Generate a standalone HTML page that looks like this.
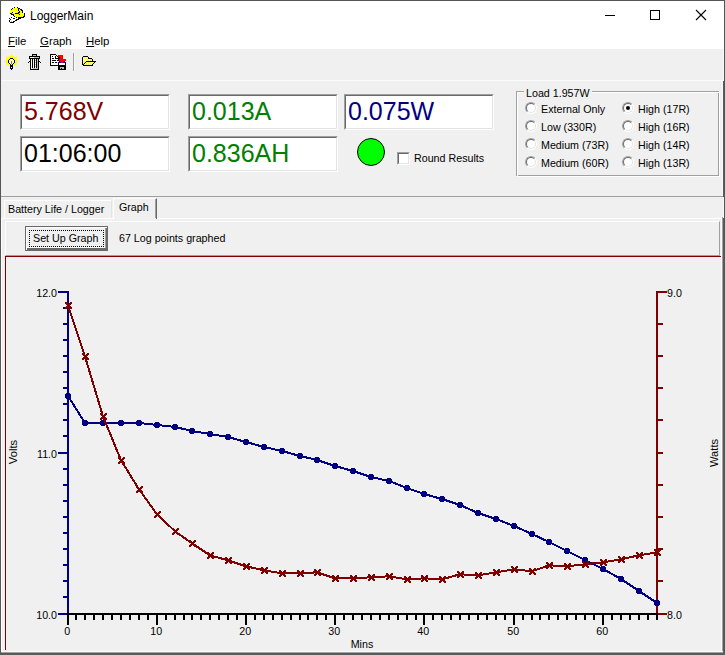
<!DOCTYPE html>
<html><head><meta charset="utf-8">
<style>
*{margin:0;padding:0;box-sizing:border-box}
html,body{width:725px;height:655px;overflow:hidden;background:#f0f0f0;font-family:"Liberation Sans",sans-serif;color:#000}
.a{position:absolute}
.t{position:absolute;white-space:nowrap;line-height:1}
.box{position:absolute;width:150px;height:36px;background:#fff;border-top:1px solid #a0a0a0;border-left:1px solid #a0a0a0;border-right:1px solid #fff;border-bottom:1px solid #fff}
.box .in{position:absolute;left:0;top:0;right:0;bottom:0;border-top:1px solid #696969;border-left:1px solid #696969;border-right:1px solid #e3e3e3;border-bottom:1px solid #e3e3e3}
.box .v{position:absolute;left:3px;top:2px;font-size:25px;line-height:28px;white-space:nowrap}
.s11{font-size:10.7px}
.rad{position:absolute;width:12px;height:12px;border-radius:50%;background:#fff;border:1px solid;border-color:#a0a0a0 #fff #fff #a0a0a0}
.rad i{position:absolute;left:0;top:0;right:0;bottom:0;border-radius:50%;border:1px solid;border-color:#696969 #e3e3e3 #e3e3e3 #696969}
.u{text-decoration:underline;text-underline-offset:1px}
</style></head>
<body>
<!-- title + menu -->
<div class="a" style="left:0;top:0;width:725px;height:49px;background:#fff"></div>
<svg class="a" style="left:0;top:0" width="30" height="30" viewBox="0 0 30 30" shape-rendering="crispEdges"><rect x="14" y="7" width="1" height="1" fill="#000"/>
<rect x="17" y="7" width="1" height="1" fill="#000"/>
<rect x="12" y="8" width="1" height="1" fill="#000"/>
<rect x="13" y="8" width="5" height="1" fill="#ff0"/>
<rect x="18" y="8" width="2" height="1" fill="#000"/>
<rect x="11" y="9" width="1" height="1" fill="#000"/>
<rect x="12" y="9" width="6" height="1" fill="#ff0"/>
<rect x="18" y="9" width="1" height="1" fill="#000"/>
<rect x="19" y="9" width="1" height="1" fill="#ff0"/>
<rect x="20" y="9" width="2" height="1" fill="#000"/>
<rect x="10" y="10" width="8" height="1" fill="#ff0"/>
<rect x="18" y="10" width="1" height="1" fill="#000"/>
<rect x="19" y="10" width="2" height="1" fill="#ff0"/>
<rect x="21" y="10" width="2" height="1" fill="#000"/>
<rect x="10" y="11" width="1" height="1" fill="#ff0"/>
<rect x="11" y="11" width="1" height="1" fill="#fff"/>
<rect x="12" y="11" width="7" height="1" fill="#ff0"/>
<rect x="19" y="11" width="1" height="1" fill="#000"/>
<rect x="20" y="11" width="2" height="1" fill="#ff0"/>
<rect x="22" y="11" width="1" height="1" fill="#000"/>
<rect x="10" y="12" width="2" height="1" fill="#ff0"/>
<rect x="12" y="12" width="1" height="1" fill="#000"/>
<rect x="13" y="12" width="2" height="1" fill="#fff"/>
<rect x="15" y="12" width="3" height="1" fill="#ff0"/>
<rect x="18" y="12" width="2" height="1" fill="#000"/>
<rect x="20" y="12" width="2" height="1" fill="#ff0"/>
<rect x="22" y="12" width="1" height="1" fill="#000"/>
<rect x="10" y="13" width="2" height="1" fill="#000"/>
<rect x="12" y="13" width="3" height="1" fill="#ff0"/>
<rect x="15" y="13" width="4" height="1" fill="#000"/>
<rect x="19" y="13" width="4" height="1" fill="#ff0"/>
<rect x="24" y="13" width="1" height="1" fill="#000"/>
<rect x="11" y="14" width="3" height="1" fill="#000"/>
<rect x="14" y="14" width="5" height="1" fill="#ff0"/>
<rect x="19" y="14" width="1" height="1" fill="#000"/>
<rect x="20" y="14" width="4" height="1" fill="#ff0"/>
<rect x="24" y="14" width="1" height="1" fill="#000"/>
<rect x="13" y="15" width="1" height="1" fill="#000"/>
<rect x="14" y="15" width="10" height="1" fill="#ff0"/>
<rect x="24" y="15" width="1" height="1" fill="#000"/>
<rect x="14" y="16" width="1" height="1" fill="#000"/>
<rect x="15" y="16" width="8" height="1" fill="#ff0"/>
<rect x="23" y="16" width="2" height="1" fill="#000"/>
<rect x="11" y="17" width="1" height="1" fill="#000"/>
<rect x="16" y="17" width="1" height="1" fill="#000"/>
<rect x="18" y="17" width="6" height="1" fill="#000"/>
<rect x="9" y="18" width="1" height="1" fill="#000"/>
<rect x="12" y="18" width="1" height="1" fill="#fff"/>
<rect x="13" y="18" width="2" height="1" fill="#000"/>
<rect x="15" y="18" width="1" height="1" fill="#fff"/>
<rect x="18" y="18" width="3" height="1" fill="#000"/>
<rect x="10" y="19" width="1" height="1" fill="#000"/>
<rect x="11" y="19" width="5" height="1" fill="#fff"/>
<rect x="16" y="19" width="3" height="1" fill="#000"/>
<rect x="9" y="20" width="1" height="1" fill="#000"/>
<rect x="10" y="20" width="5" height="1" fill="#fff"/>
<rect x="15" y="20" width="2" height="1" fill="#000"/>
<rect x="9" y="21" width="1" height="1" fill="#000"/>
<rect x="10" y="21" width="1" height="1" fill="#fff"/>
<rect x="11" y="21" width="1" height="1" fill="#c0c0c0"/>
<rect x="12" y="21" width="1" height="1" fill="#fff"/>
<rect x="13" y="21" width="2" height="1" fill="#000"/>
<rect x="10" y="22" width="4" height="1" fill="#000"/></svg>
<div class="t" style="left:30px;top:10px;font-size:12px">LoggerMain</div>
<div class="a" style="left:605px;top:15px;width:10px;height:1px;background:#000"></div>
<div class="a" style="left:650px;top:10px;width:10px;height:10px;border:1px solid #000"></div>
<svg class="a" style="left:695px;top:9px" width="12" height="12" viewBox="0 0 12 12"><path d="M1 1L11 11M11 1L1 11" stroke="#000" stroke-width="1.1"/></svg>
<div class="t" style="left:8px;top:36px;font-size:11.4px"><span class="u">F</span>ile</div>
<div class="t" style="left:40px;top:36px;font-size:11.4px"><span class="u">G</span>raph</div>
<div class="t" style="left:86px;top:36px;font-size:11.4px"><span class="u">H</span>elp</div>

<!-- toolbar icons -->
<svg class="a" style="left:0;top:0" width="100" height="80" viewBox="0 0 100 80" shape-rendering="crispEdges"><rect x="11" y="54" width="1" height="1" fill="#ff0"/>
<rect x="11" y="55" width="1" height="1" fill="#ff0"/>
<rect x="6" y="56" width="1" height="1" fill="#ff0"/>
<rect x="9" y="56" width="5" height="1" fill="#ff0"/>
<rect x="16" y="56" width="1" height="1" fill="#ff0"/>
<rect x="7" y="57" width="9" height="1" fill="#ff0"/>
<rect x="6" y="58" width="4" height="1" fill="#ff0"/>
<rect x="10" y="58" width="3" height="1" fill="#000"/>
<rect x="13" y="58" width="4" height="1" fill="#ff0"/>
<rect x="6" y="59" width="3" height="1" fill="#ff0"/>
<rect x="9" y="59" width="1" height="1" fill="#000"/>
<rect x="10" y="59" width="1" height="1" fill="#fff"/>
<rect x="11" y="59" width="1" height="1" fill="#ffff80"/>
<rect x="12" y="59" width="1" height="1" fill="#fff"/>
<rect x="13" y="59" width="1" height="1" fill="#000"/>
<rect x="14" y="59" width="3" height="1" fill="#ff0"/>
<rect x="6" y="60" width="2" height="1" fill="#ff0"/>
<rect x="8" y="60" width="1" height="1" fill="#000"/>
<rect x="9" y="60" width="1" height="1" fill="#fff"/>
<rect x="10" y="60" width="1" height="1" fill="#ffff80"/>
<rect x="11" y="60" width="1" height="1" fill="#fff"/>
<rect x="12" y="60" width="1" height="1" fill="#ffff80"/>
<rect x="13" y="60" width="1" height="1" fill="#fff"/>
<rect x="14" y="60" width="1" height="1" fill="#000"/>
<rect x="15" y="60" width="2" height="1" fill="#ff0"/>
<rect x="4" y="61" width="4" height="1" fill="#ff0"/>
<rect x="8" y="61" width="1" height="1" fill="#000"/>
<rect x="9" y="61" width="1" height="1" fill="#fff"/>
<rect x="10" y="61" width="1" height="1" fill="#ffff80"/>
<rect x="11" y="61" width="1" height="1" fill="#808080"/>
<rect x="12" y="61" width="1" height="1" fill="#ffff80"/>
<rect x="13" y="61" width="1" height="1" fill="#fff"/>
<rect x="14" y="61" width="1" height="1" fill="#000"/>
<rect x="15" y="61" width="4" height="1" fill="#ff0"/>
<rect x="6" y="62" width="2" height="1" fill="#ff0"/>
<rect x="8" y="62" width="1" height="1" fill="#000"/>
<rect x="9" y="62" width="1" height="1" fill="#fff"/>
<rect x="10" y="62" width="1" height="1" fill="#ffff80"/>
<rect x="11" y="62" width="1" height="1" fill="#808080"/>
<rect x="12" y="62" width="1" height="1" fill="#ffff80"/>
<rect x="13" y="62" width="1" height="1" fill="#fff"/>
<rect x="14" y="62" width="1" height="1" fill="#000"/>
<rect x="15" y="62" width="2" height="1" fill="#ff0"/>
<rect x="6" y="63" width="3" height="1" fill="#ff0"/>
<rect x="9" y="63" width="1" height="1" fill="#000"/>
<rect x="10" y="63" width="1" height="1" fill="#fff"/>
<rect x="11" y="63" width="1" height="1" fill="#808080"/>
<rect x="12" y="63" width="1" height="1" fill="#fff"/>
<rect x="13" y="63" width="1" height="1" fill="#000"/>
<rect x="14" y="63" width="3" height="1" fill="#ff0"/>
<rect x="7" y="64" width="3" height="1" fill="#ff0"/>
<rect x="10" y="64" width="1" height="1" fill="#000"/>
<rect x="11" y="64" width="1" height="1" fill="#ff0"/>
<rect x="12" y="64" width="1" height="1" fill="#000"/>
<rect x="13" y="64" width="3" height="1" fill="#ff0"/>
<rect x="6" y="65" width="1" height="1" fill="#ff0"/>
<rect x="10" y="65" width="3" height="1" fill="#000"/>
<rect x="16" y="65" width="1" height="1" fill="#ff0"/>
<rect x="10" y="66" width="3" height="1" fill="#000"/>
<rect x="10" y="67" width="1" height="1" fill="#000"/>
<rect x="11" y="67" width="1" height="1" fill="#fff"/>
<rect x="12" y="67" width="1" height="1" fill="#000"/>
<rect x="10" y="68" width="3" height="1" fill="#000"/>
<rect x="11" y="69" width="1" height="1" fill="#000"/>
<rect x="32" y="54" width="5" height="1" fill="#000"/>
<rect x="32" y="55" width="1" height="1" fill="#000"/>
<rect x="33" y="55" width="3" height="1" fill="#c0c0c0"/>
<rect x="36" y="55" width="1" height="1" fill="#000"/>
<rect x="29" y="56" width="11" height="1" fill="#000"/>
<rect x="29" y="57" width="1" height="1" fill="#000"/>
<rect x="30" y="57" width="4" height="1" fill="#fff"/>
<rect x="34" y="57" width="5" height="1" fill="#c0c0c0"/>
<rect x="39" y="57" width="1" height="1" fill="#000"/>
<rect x="29" y="58" width="11" height="1" fill="#000"/>
<rect x="30" y="59" width="1" height="1" fill="#000"/>
<rect x="31" y="59" width="1" height="1" fill="#fff"/>
<rect x="32" y="59" width="1" height="1" fill="#000"/>
<rect x="33" y="59" width="1" height="1" fill="#fff"/>
<rect x="34" y="59" width="1" height="1" fill="#000"/>
<rect x="35" y="59" width="1" height="1" fill="#fff"/>
<rect x="36" y="59" width="1" height="1" fill="#000"/>
<rect x="37" y="59" width="1" height="1" fill="#c0c0c0"/>
<rect x="38" y="59" width="1" height="1" fill="#000"/>
<rect x="30" y="60" width="1" height="1" fill="#000"/>
<rect x="31" y="60" width="1" height="1" fill="#fff"/>
<rect x="32" y="60" width="1" height="1" fill="#000"/>
<rect x="33" y="60" width="1" height="1" fill="#fff"/>
<rect x="34" y="60" width="1" height="1" fill="#000"/>
<rect x="35" y="60" width="1" height="1" fill="#c0c0c0"/>
<rect x="36" y="60" width="1" height="1" fill="#000"/>
<rect x="37" y="60" width="1" height="1" fill="#c0c0c0"/>
<rect x="38" y="60" width="1" height="1" fill="#000"/>
<rect x="29" y="61" width="2" height="1" fill="#000"/>
<rect x="31" y="61" width="1" height="1" fill="#fff"/>
<rect x="32" y="61" width="1" height="1" fill="#000"/>
<rect x="33" y="61" width="1" height="1" fill="#fff"/>
<rect x="34" y="61" width="1" height="1" fill="#000"/>
<rect x="35" y="61" width="1" height="1" fill="#fff"/>
<rect x="36" y="61" width="1" height="1" fill="#000"/>
<rect x="37" y="61" width="1" height="1" fill="#c0c0c0"/>
<rect x="38" y="61" width="2" height="1" fill="#000"/>
<rect x="28" y="62" width="1" height="1" fill="#000"/>
<rect x="30" y="62" width="1" height="1" fill="#000"/>
<rect x="31" y="62" width="1" height="1" fill="#fff"/>
<rect x="32" y="62" width="1" height="1" fill="#000"/>
<rect x="33" y="62" width="1" height="1" fill="#fff"/>
<rect x="34" y="62" width="1" height="1" fill="#000"/>
<rect x="35" y="62" width="1" height="1" fill="#c0c0c0"/>
<rect x="36" y="62" width="1" height="1" fill="#000"/>
<rect x="37" y="62" width="1" height="1" fill="#c0c0c0"/>
<rect x="38" y="62" width="1" height="1" fill="#000"/>
<rect x="40" y="62" width="1" height="1" fill="#000"/>
<rect x="30" y="63" width="1" height="1" fill="#000"/>
<rect x="31" y="63" width="1" height="1" fill="#fff"/>
<rect x="32" y="63" width="1" height="1" fill="#000"/>
<rect x="33" y="63" width="1" height="1" fill="#fff"/>
<rect x="34" y="63" width="1" height="1" fill="#000"/>
<rect x="35" y="63" width="1" height="1" fill="#fff"/>
<rect x="36" y="63" width="1" height="1" fill="#000"/>
<rect x="37" y="63" width="1" height="1" fill="#c0c0c0"/>
<rect x="38" y="63" width="1" height="1" fill="#000"/>
<rect x="30" y="64" width="1" height="1" fill="#000"/>
<rect x="31" y="64" width="1" height="1" fill="#fff"/>
<rect x="32" y="64" width="1" height="1" fill="#000"/>
<rect x="33" y="64" width="1" height="1" fill="#fff"/>
<rect x="34" y="64" width="1" height="1" fill="#000"/>
<rect x="35" y="64" width="1" height="1" fill="#c0c0c0"/>
<rect x="36" y="64" width="1" height="1" fill="#000"/>
<rect x="37" y="64" width="1" height="1" fill="#c0c0c0"/>
<rect x="38" y="64" width="1" height="1" fill="#000"/>
<rect x="30" y="65" width="1" height="1" fill="#000"/>
<rect x="31" y="65" width="1" height="1" fill="#fff"/>
<rect x="32" y="65" width="1" height="1" fill="#000"/>
<rect x="33" y="65" width="1" height="1" fill="#fff"/>
<rect x="34" y="65" width="1" height="1" fill="#000"/>
<rect x="35" y="65" width="1" height="1" fill="#fff"/>
<rect x="36" y="65" width="1" height="1" fill="#000"/>
<rect x="37" y="65" width="1" height="1" fill="#c0c0c0"/>
<rect x="38" y="65" width="1" height="1" fill="#000"/>
<rect x="30" y="66" width="1" height="1" fill="#000"/>
<rect x="31" y="66" width="1" height="1" fill="#fff"/>
<rect x="32" y="66" width="1" height="1" fill="#000"/>
<rect x="33" y="66" width="1" height="1" fill="#fff"/>
<rect x="34" y="66" width="1" height="1" fill="#000"/>
<rect x="35" y="66" width="1" height="1" fill="#c0c0c0"/>
<rect x="36" y="66" width="1" height="1" fill="#000"/>
<rect x="37" y="66" width="1" height="1" fill="#c0c0c0"/>
<rect x="38" y="66" width="1" height="1" fill="#000"/>
<rect x="30" y="67" width="1" height="1" fill="#000"/>
<rect x="31" y="67" width="1" height="1" fill="#fff"/>
<rect x="32" y="67" width="1" height="1" fill="#000"/>
<rect x="33" y="67" width="1" height="1" fill="#fff"/>
<rect x="34" y="67" width="1" height="1" fill="#000"/>
<rect x="35" y="67" width="1" height="1" fill="#fff"/>
<rect x="36" y="67" width="1" height="1" fill="#000"/>
<rect x="37" y="67" width="1" height="1" fill="#c0c0c0"/>
<rect x="38" y="67" width="1" height="1" fill="#000"/>
<rect x="30" y="68" width="1" height="1" fill="#000"/>
<rect x="31" y="68" width="1" height="1" fill="#fff"/>
<rect x="32" y="68" width="6" height="1" fill="#c0c0c0"/>
<rect x="38" y="68" width="1" height="1" fill="#000"/>
<rect x="30" y="69" width="9" height="1" fill="#000"/>
<rect x="50" y="54" width="6" height="1" fill="#000"/>
<rect x="50" y="55" width="1" height="1" fill="#000"/>
<rect x="51" y="55" width="5" height="1" fill="#fff"/>
<rect x="56" y="55" width="1" height="1" fill="#000"/>
<rect x="58" y="55" width="5" height="1" fill="#f00"/>
<rect x="50" y="56" width="1" height="1" fill="#000"/>
<rect x="51" y="56" width="1" height="1" fill="#fff"/>
<rect x="52" y="56" width="1" height="1" fill="#000"/>
<rect x="53" y="56" width="2" height="1" fill="#fff"/>
<rect x="55" y="56" width="1" height="1" fill="#000"/>
<rect x="56" y="56" width="1" height="1" fill="#fff"/>
<rect x="57" y="56" width="1" height="1" fill="#000"/>
<rect x="58" y="56" width="5" height="1" fill="#f00"/>
<rect x="50" y="57" width="1" height="1" fill="#000"/>
<rect x="51" y="57" width="4" height="1" fill="#fff"/>
<rect x="55" y="57" width="1" height="1" fill="#000"/>
<rect x="56" y="57" width="2" height="1" fill="#fff"/>
<rect x="58" y="57" width="2" height="1" fill="#000"/>
<rect x="60" y="57" width="3" height="1" fill="#f00"/>
<rect x="50" y="58" width="1" height="1" fill="#000"/>
<rect x="51" y="58" width="1" height="1" fill="#fff"/>
<rect x="52" y="58" width="2" height="1" fill="#000"/>
<rect x="54" y="58" width="1" height="1" fill="#fff"/>
<rect x="55" y="58" width="5" height="1" fill="#000"/>
<rect x="60" y="58" width="3" height="1" fill="#f00"/>
<rect x="50" y="59" width="1" height="1" fill="#000"/>
<rect x="51" y="59" width="7" height="1" fill="#fff"/>
<rect x="58" y="59" width="1" height="1" fill="#000"/>
<rect x="59" y="59" width="7" height="1" fill="#f00"/>
<rect x="50" y="60" width="1" height="1" fill="#000"/>
<rect x="51" y="60" width="1" height="1" fill="#fff"/>
<rect x="52" y="60" width="4" height="1" fill="#000"/>
<rect x="56" y="60" width="1" height="1" fill="#fff"/>
<rect x="57" y="60" width="2" height="1" fill="#000"/>
<rect x="59" y="60" width="7" height="1" fill="#f00"/>
<rect x="50" y="61" width="1" height="1" fill="#000"/>
<rect x="51" y="61" width="8" height="1" fill="#fff"/>
<rect x="59" y="61" width="1" height="1" fill="#000"/>
<rect x="60" y="61" width="4" height="1" fill="#f00"/>
<rect x="64" y="61" width="1" height="1" fill="#000"/>
<rect x="50" y="62" width="1" height="1" fill="#000"/>
<rect x="51" y="62" width="1" height="1" fill="#fff"/>
<rect x="52" y="62" width="2" height="1" fill="#000"/>
<rect x="54" y="62" width="1" height="1" fill="#fff"/>
<rect x="55" y="62" width="2" height="1" fill="#000"/>
<rect x="57" y="62" width="1" height="1" fill="#fff"/>
<rect x="58" y="62" width="1" height="1" fill="#000"/>
<rect x="59" y="62" width="2" height="1" fill="#00f"/>
<rect x="61" y="62" width="2" height="1" fill="#f00"/>
<rect x="63" y="62" width="2" height="1" fill="#00f"/>
<rect x="65" y="62" width="1" height="1" fill="#000"/>
<rect x="50" y="63" width="1" height="1" fill="#000"/>
<rect x="51" y="63" width="7" height="1" fill="#fff"/>
<rect x="58" y="63" width="1" height="1" fill="#000"/>
<rect x="59" y="63" width="6" height="1" fill="#fff"/>
<rect x="65" y="63" width="1" height="1" fill="#000"/>
<rect x="50" y="64" width="1" height="1" fill="#000"/>
<rect x="51" y="64" width="7" height="1" fill="#fff"/>
<rect x="58" y="64" width="1" height="1" fill="#000"/>
<rect x="59" y="64" width="6" height="1" fill="#fff"/>
<rect x="65" y="64" width="1" height="1" fill="#000"/>
<rect x="50" y="65" width="16" height="1" fill="#000"/>
<rect x="58" y="66" width="8" height="1" fill="#000"/>
<rect x="58" y="67" width="2" height="1" fill="#000"/>
<rect x="60" y="67" width="4" height="1" fill="#c0c0c0"/>
<rect x="64" y="67" width="2" height="1" fill="#000"/>
<rect x="58" y="68" width="2" height="1" fill="#000"/>
<rect x="60" y="68" width="1" height="1" fill="#c0c0c0"/>
<rect x="61" y="68" width="1" height="1" fill="#000"/>
<rect x="62" y="68" width="2" height="1" fill="#c0c0c0"/>
<rect x="64" y="68" width="2" height="1" fill="#000"/>
<rect x="58" y="69" width="8" height="1" fill="#000"/>
<rect x="73" y="53" width="1" height="18" fill="#a0a0a0"/><rect x="74" y="53" width="1" height="18" fill="#fafafa"/>
<rect x="83" y="56" width="5" height="1" fill="#000"/>
<rect x="82" y="57" width="1" height="1" fill="#000"/>
<rect x="83" y="57" width="1" height="1" fill="#ff0"/>
<rect x="84" y="57" width="1" height="1" fill="#fff"/>
<rect x="85" y="57" width="1" height="1" fill="#ff0"/>
<rect x="86" y="57" width="1" height="1" fill="#fff"/>
<rect x="87" y="57" width="1" height="1" fill="#ff0"/>
<rect x="88" y="57" width="1" height="1" fill="#000"/>
<rect x="82" y="58" width="1" height="1" fill="#000"/>
<rect x="83" y="58" width="1" height="1" fill="#fff"/>
<rect x="84" y="58" width="1" height="1" fill="#ff0"/>
<rect x="85" y="58" width="1" height="1" fill="#fff"/>
<rect x="86" y="58" width="1" height="1" fill="#ff0"/>
<rect x="87" y="58" width="1" height="1" fill="#fff"/>
<rect x="88" y="58" width="4" height="1" fill="#000"/>
<rect x="82" y="59" width="1" height="1" fill="#000"/>
<rect x="83" y="59" width="1" height="1" fill="#ff0"/>
<rect x="84" y="59" width="1" height="1" fill="#fff"/>
<rect x="85" y="59" width="1" height="1" fill="#ff0"/>
<rect x="86" y="59" width="1" height="1" fill="#fff"/>
<rect x="87" y="59" width="1" height="1" fill="#ff0"/>
<rect x="88" y="59" width="1" height="1" fill="#fff"/>
<rect x="89" y="59" width="1" height="1" fill="#ff0"/>
<rect x="90" y="59" width="1" height="1" fill="#fff"/>
<rect x="91" y="59" width="1" height="1" fill="#ff0"/>
<rect x="92" y="59" width="1" height="1" fill="#000"/>
<rect x="82" y="60" width="1" height="1" fill="#000"/>
<rect x="83" y="60" width="1" height="1" fill="#fff"/>
<rect x="84" y="60" width="1" height="1" fill="#ff0"/>
<rect x="85" y="60" width="1" height="1" fill="#fff"/>
<rect x="86" y="60" width="1" height="1" fill="#ff0"/>
<rect x="87" y="60" width="1" height="1" fill="#fff"/>
<rect x="88" y="60" width="1" height="1" fill="#ff0"/>
<rect x="89" y="60" width="1" height="1" fill="#fff"/>
<rect x="90" y="60" width="1" height="1" fill="#ff0"/>
<rect x="91" y="60" width="1" height="1" fill="#fff"/>
<rect x="92" y="60" width="1" height="1" fill="#000"/>
<rect x="82" y="61" width="1" height="1" fill="#000"/>
<rect x="83" y="61" width="1" height="1" fill="#ff0"/>
<rect x="84" y="61" width="1" height="1" fill="#fff"/>
<rect x="85" y="61" width="1" height="1" fill="#ff0"/>
<rect x="86" y="61" width="10" height="1" fill="#000"/>
<rect x="82" y="62" width="1" height="1" fill="#000"/>
<rect x="83" y="62" width="1" height="1" fill="#fff"/>
<rect x="84" y="62" width="1" height="1" fill="#ff0"/>
<rect x="85" y="62" width="1" height="1" fill="#000"/>
<rect x="86" y="62" width="1" height="1" fill="#ff0"/>
<rect x="87" y="62" width="1" height="1" fill="#fff"/>
<rect x="88" y="62" width="1" height="1" fill="#ff0"/>
<rect x="89" y="62" width="1" height="1" fill="#fff"/>
<rect x="90" y="62" width="1" height="1" fill="#ff0"/>
<rect x="91" y="62" width="1" height="1" fill="#fff"/>
<rect x="92" y="62" width="1" height="1" fill="#ff0"/>
<rect x="93" y="62" width="1" height="1" fill="#fff"/>
<rect x="94" y="62" width="1" height="1" fill="#000"/>
<rect x="82" y="63" width="1" height="1" fill="#000"/>
<rect x="83" y="63" width="1" height="1" fill="#ff0"/>
<rect x="84" y="63" width="1" height="1" fill="#000"/>
<rect x="85" y="63" width="1" height="1" fill="#fff"/>
<rect x="86" y="63" width="1" height="1" fill="#ff0"/>
<rect x="87" y="63" width="1" height="1" fill="#fff"/>
<rect x="88" y="63" width="1" height="1" fill="#ff0"/>
<rect x="89" y="63" width="1" height="1" fill="#fff"/>
<rect x="90" y="63" width="1" height="1" fill="#ff0"/>
<rect x="91" y="63" width="1" height="1" fill="#fff"/>
<rect x="92" y="63" width="1" height="1" fill="#ff0"/>
<rect x="93" y="63" width="1" height="1" fill="#000"/>
<rect x="82" y="64" width="2" height="1" fill="#000"/>
<rect x="84" y="64" width="1" height="1" fill="#ff0"/>
<rect x="85" y="64" width="1" height="1" fill="#fff"/>
<rect x="86" y="64" width="1" height="1" fill="#ff0"/>
<rect x="87" y="64" width="1" height="1" fill="#fff"/>
<rect x="88" y="64" width="1" height="1" fill="#ff0"/>
<rect x="89" y="64" width="1" height="1" fill="#fff"/>
<rect x="90" y="64" width="1" height="1" fill="#ff0"/>
<rect x="91" y="64" width="1" height="1" fill="#fff"/>
<rect x="92" y="64" width="1" height="1" fill="#000"/>
<rect x="83" y="65" width="10" height="1" fill="#000"/></svg>
<div class="a" style="left:1px;top:80px;width:722px;height:1px;background:#fcfcfc"></div>

<!-- display boxes -->
<div class="box" style="left:20px;top:94px"><div class="in"></div><div class="v" style="color:#800000">5.768V</div></div>
<div class="box" style="left:188px;top:94px"><div class="in"></div><div class="v" style="color:#008000">0.013A</div></div>
<div class="box" style="left:344px;top:94px"><div class="in"></div><div class="v" style="color:#000080">0.075W</div></div>
<div class="box" style="left:20px;top:136px"><div class="in"></div><div class="v" style="color:#000">01:06:00</div></div>
<div class="box" style="left:188px;top:136px"><div class="in"></div><div class="v" style="color:#008000">0.836AH</div></div>

<div class="a" style="left:357px;top:138px;width:28px;height:28px;border-radius:50%;background:#00ff00;border:1px solid #000"></div>
<div class="a" style="left:397px;top:152px;width:13px;height:13px;background:#fff;border-top:1px solid #a0a0a0;border-left:1px solid #a0a0a0;border-right:1px solid #fff;border-bottom:1px solid #fff"><div class="a" style="left:0;top:0;right:0;bottom:0;border-top:1px solid #696969;border-left:1px solid #696969;border-right:1px solid #e3e3e3;border-bottom:1px solid #e3e3e3"></div></div>
<div class="t s11" style="left:414px;top:153px">Round Results</div>

<!-- group box -->
<div class="a" style="left:516px;top:91px;width:203px;height:85px;border:1px solid #a0a0a0"></div>
<div class="a" style="left:517px;top:92px;width:203px;height:85px;border:1px solid #fff;border-right-color:#fff"></div>
<div class="a" style="left:517px;top:92px;width:201px;height:83px;border-top:1px solid #fff;border-left:1px solid #fff"></div>
<div class="t s11" style="left:524px;top:88px;background:#f0f0f0;padding:0 2px">Load 1.957W</div>
<div class="rad" style="left:525px;top:102px"><i></i></div>
<div class="rad" style="left:525px;top:120px"><i></i></div>
<div class="rad" style="left:525px;top:138px"><i></i></div>
<div class="rad" style="left:525px;top:156px"><i></i></div>
<div class="rad" style="left:622px;top:102px"><i></i><div class="a" style="left:3px;top:3px;width:4px;height:4px;border-radius:50%;background:#000"></div></div>
<div class="rad" style="left:622px;top:120px"><i></i></div>
<div class="rad" style="left:622px;top:138px"><i></i></div>
<div class="rad" style="left:622px;top:156px"><i></i></div>
<div class="t s11" style="left:541px;top:104px">External Only</div>
<div class="t s11" style="left:541px;top:122px">Low (330R)</div>
<div class="t s11" style="left:541px;top:140px">Medium (73R)</div>
<div class="t s11" style="left:541px;top:158px">Medium (60R)</div>
<div class="t s11" style="left:638px;top:104px">High (17R)</div>
<div class="t s11" style="left:638px;top:122px">High (16R)</div>
<div class="t s11" style="left:638px;top:140px">High (14R)</div>
<div class="t s11" style="left:638px;top:158px">High (13R)</div>

<!-- separator line -->
<div class="a" style="left:1px;top:196px;width:722px;height:1px;background:#a0a0a0"></div>

<!-- tabs -->
<div class="a" style="left:4px;top:200px;width:108px;height:18px;border-top:1px solid #fff;border-left:1px solid #fff;border-right:1px solid #e3e3e3"></div>
<div class="t s11" style="left:8px;top:204px">Battery Life / Logger</div>
<div class="a" style="left:1px;top:218px;width:721px;height:1px;background:#fff"></div>
<div class="a" style="left:113px;top:198px;width:44px;height:21px;background:#f0f0f0;border-top:1px solid #fff;border-left:1px solid #fff;border-right:1px solid #696969"></div>
<div class="a" style="left:155px;top:199px;width:1px;height:19px;background:#a0a0a0"></div>
<div class="t s11" style="left:119px;top:202px">Graph</div>
<div class="a" style="left:1px;top:218px;width:1px;height:434px;background:#fff"></div>
<div class="a" style="left:721px;top:218px;width:1px;height:434px;background:#fcfcfc"></div>
<div class="a" style="left:722px;top:217px;width:1px;height:436px;background:#a0a0a0"></div>
<div class="a" style="left:1px;top:651px;width:722px;height:1px;background:#fcfcfc"></div>
<div class="a" style="left:1px;top:652px;width:722px;height:1px;background:#a0a0a0"></div>

<!-- inner panel -->
<div class="a" style="left:5px;top:221px;width:715px;height:35px;border-top:1px solid #fff;border-left:1px solid #fff;border-right:1px solid #a0a0a0;border-bottom:1px solid #a0a0a0"></div>
<!-- button -->
<div class="a" style="left:25px;top:226px;width:83px;height:25px;background:#696969"></div>
<div class="a" style="left:26px;top:227px;width:81px;height:23px;background:#fff"></div>
<div class="a" style="left:27px;top:228px;width:80px;height:22px;background:#696969"></div>
<div class="a" style="left:27px;top:228px;width:79px;height:20px;background:#a0a0a0"></div>
<div class="a" style="left:27px;top:228px;width:78px;height:20px;background:#fff"></div>
<div class="a" style="left:27px;top:228px;width:78px;height:19px;background:#a0a0a0"></div>
<div class="a" style="left:27px;top:228px;width:78px;height:19px;background:#f0f0f0"></div>
<div class="a" style="left:29px;top:230px;width:75px;height:1px;background:repeating-linear-gradient(90deg,#000 0 1px,transparent 1px 2px)"></div>
<div class="a" style="left:29px;top:246px;width:75px;height:1px;background:repeating-linear-gradient(90deg,#000 0 1px,transparent 1px 2px)"></div>
<div class="a" style="left:29px;top:230px;width:1px;height:17px;background:repeating-linear-gradient(180deg,#000 0 1px,transparent 1px 2px)"></div>
<div class="a" style="left:103px;top:230px;width:1px;height:17px;background:repeating-linear-gradient(180deg,#000 0 1px,transparent 1px 2px)"></div>
<div class="t s11" style="left:33px;top:233px">Set Up Graph</div>
<div class="t s11" style="left:119px;top:233px">67 Log points graphed</div>

<!-- graph panel -->
<div class="a" style="left:5px;top:256px;width:716px;height:1px;background:#800000"></div>
<div class="a" style="left:5px;top:256px;width:1px;height:394px;background:#800000"></div>

<svg class="a" style="left:0;top:0" width="725" height="655" viewBox="0 0 725 655">
<line x1="68" y1="291" x2="68" y2="615" stroke="#000080" stroke-width="2"/>
<line x1="58" y1="292.00" x2="68" y2="292.00" stroke="#000080" stroke-width="2"/>
<line x1="63" y1="308.00" x2="68" y2="308.00" stroke="#000080" stroke-width="2"/>
<line x1="63" y1="324.00" x2="68" y2="324.00" stroke="#000080" stroke-width="2"/>
<line x1="63" y1="340.00" x2="68" y2="340.00" stroke="#000080" stroke-width="2"/>
<line x1="63" y1="356.00" x2="68" y2="356.00" stroke="#000080" stroke-width="2"/>
<line x1="63" y1="372.00" x2="68" y2="372.00" stroke="#000080" stroke-width="2"/>
<line x1="63" y1="388.00" x2="68" y2="388.00" stroke="#000080" stroke-width="2"/>
<line x1="63" y1="404.00" x2="68" y2="404.00" stroke="#000080" stroke-width="2"/>
<line x1="63" y1="420.00" x2="68" y2="420.00" stroke="#000080" stroke-width="2"/>
<line x1="63" y1="436.00" x2="68" y2="436.00" stroke="#000080" stroke-width="2"/>
<line x1="58" y1="453.00" x2="68" y2="453.00" stroke="#000080" stroke-width="2"/>
<line x1="63" y1="469.00" x2="68" y2="469.00" stroke="#000080" stroke-width="2"/>
<line x1="63" y1="485.00" x2="68" y2="485.00" stroke="#000080" stroke-width="2"/>
<line x1="63" y1="501.00" x2="68" y2="501.00" stroke="#000080" stroke-width="2"/>
<line x1="63" y1="517.00" x2="68" y2="517.00" stroke="#000080" stroke-width="2"/>
<line x1="63" y1="533.00" x2="68" y2="533.00" stroke="#000080" stroke-width="2"/>
<line x1="63" y1="549.00" x2="68" y2="549.00" stroke="#000080" stroke-width="2"/>
<line x1="63" y1="565.00" x2="68" y2="565.00" stroke="#000080" stroke-width="2"/>
<line x1="63" y1="581.00" x2="68" y2="581.00" stroke="#000080" stroke-width="2"/>
<line x1="63" y1="597.00" x2="68" y2="597.00" stroke="#000080" stroke-width="2"/>
<line x1="58" y1="614.00" x2="68" y2="614.00" stroke="#000080" stroke-width="2"/>
<line x1="657" y1="291" x2="657" y2="615" stroke="#800000" stroke-width="2"/>
<line x1="656" y1="292.00" x2="667" y2="292.00" stroke="#800000" stroke-width="2"/>
<line x1="656" y1="324.00" x2="663" y2="324.00" stroke="#800000" stroke-width="2"/>
<line x1="656" y1="356.00" x2="663" y2="356.00" stroke="#800000" stroke-width="2"/>
<line x1="656" y1="388.00" x2="663" y2="388.00" stroke="#800000" stroke-width="2"/>
<line x1="656" y1="420.00" x2="663" y2="420.00" stroke="#800000" stroke-width="2"/>
<line x1="656" y1="453.00" x2="663" y2="453.00" stroke="#800000" stroke-width="2"/>
<line x1="656" y1="485.00" x2="663" y2="485.00" stroke="#800000" stroke-width="2"/>
<line x1="656" y1="517.00" x2="663" y2="517.00" stroke="#800000" stroke-width="2"/>
<line x1="656" y1="549.00" x2="663" y2="549.00" stroke="#800000" stroke-width="2"/>
<line x1="656" y1="581.00" x2="663" y2="581.00" stroke="#800000" stroke-width="2"/>
<line x1="656" y1="614.00" x2="667" y2="614.00" stroke="#800000" stroke-width="2"/>
<line x1="67" y1="614" x2="658" y2="614" stroke="#000" stroke-width="2"/>
<line x1="68.00" y1="614" x2="68.00" y2="625" stroke="#000" stroke-width="2"/>
<line x1="76.00" y1="614" x2="76.00" y2="620" stroke="#000" stroke-width="2"/>
<line x1="85.00" y1="614" x2="85.00" y2="620" stroke="#000" stroke-width="2"/>
<line x1="94.00" y1="614" x2="94.00" y2="620" stroke="#000" stroke-width="2"/>
<line x1="103.00" y1="614" x2="103.00" y2="620" stroke="#000" stroke-width="2"/>
<line x1="112.00" y1="614" x2="112.00" y2="620" stroke="#000" stroke-width="2"/>
<line x1="121.00" y1="614" x2="121.00" y2="620" stroke="#000" stroke-width="2"/>
<line x1="130.00" y1="614" x2="130.00" y2="620" stroke="#000" stroke-width="2"/>
<line x1="139.00" y1="614" x2="139.00" y2="620" stroke="#000" stroke-width="2"/>
<line x1="148.00" y1="614" x2="148.00" y2="620" stroke="#000" stroke-width="2"/>
<line x1="157.00" y1="614" x2="157.00" y2="625" stroke="#000" stroke-width="2"/>
<line x1="166.00" y1="614" x2="166.00" y2="620" stroke="#000" stroke-width="2"/>
<line x1="175.00" y1="614" x2="175.00" y2="620" stroke="#000" stroke-width="2"/>
<line x1="184.00" y1="614" x2="184.00" y2="620" stroke="#000" stroke-width="2"/>
<line x1="192.00" y1="614" x2="192.00" y2="620" stroke="#000" stroke-width="2"/>
<line x1="201.00" y1="614" x2="201.00" y2="620" stroke="#000" stroke-width="2"/>
<line x1="210.00" y1="614" x2="210.00" y2="620" stroke="#000" stroke-width="2"/>
<line x1="219.00" y1="614" x2="219.00" y2="620" stroke="#000" stroke-width="2"/>
<line x1="228.00" y1="614" x2="228.00" y2="620" stroke="#000" stroke-width="2"/>
<line x1="237.00" y1="614" x2="237.00" y2="620" stroke="#000" stroke-width="2"/>
<line x1="246.00" y1="614" x2="246.00" y2="625" stroke="#000" stroke-width="2"/>
<line x1="255.00" y1="614" x2="255.00" y2="620" stroke="#000" stroke-width="2"/>
<line x1="264.00" y1="614" x2="264.00" y2="620" stroke="#000" stroke-width="2"/>
<line x1="273.00" y1="614" x2="273.00" y2="620" stroke="#000" stroke-width="2"/>
<line x1="282.00" y1="614" x2="282.00" y2="620" stroke="#000" stroke-width="2"/>
<line x1="291.00" y1="614" x2="291.00" y2="620" stroke="#000" stroke-width="2"/>
<line x1="300.00" y1="614" x2="300.00" y2="620" stroke="#000" stroke-width="2"/>
<line x1="308.00" y1="614" x2="308.00" y2="620" stroke="#000" stroke-width="2"/>
<line x1="317.00" y1="614" x2="317.00" y2="620" stroke="#000" stroke-width="2"/>
<line x1="326.00" y1="614" x2="326.00" y2="620" stroke="#000" stroke-width="2"/>
<line x1="335.00" y1="614" x2="335.00" y2="625" stroke="#000" stroke-width="2"/>
<line x1="344.00" y1="614" x2="344.00" y2="620" stroke="#000" stroke-width="2"/>
<line x1="353.00" y1="614" x2="353.00" y2="620" stroke="#000" stroke-width="2"/>
<line x1="362.00" y1="614" x2="362.00" y2="620" stroke="#000" stroke-width="2"/>
<line x1="371.00" y1="614" x2="371.00" y2="620" stroke="#000" stroke-width="2"/>
<line x1="380.00" y1="614" x2="380.00" y2="620" stroke="#000" stroke-width="2"/>
<line x1="389.00" y1="614" x2="389.00" y2="620" stroke="#000" stroke-width="2"/>
<line x1="398.00" y1="614" x2="398.00" y2="620" stroke="#000" stroke-width="2"/>
<line x1="407.00" y1="614" x2="407.00" y2="620" stroke="#000" stroke-width="2"/>
<line x1="416.00" y1="614" x2="416.00" y2="620" stroke="#000" stroke-width="2"/>
<line x1="424.00" y1="614" x2="424.00" y2="625" stroke="#000" stroke-width="2"/>
<line x1="433.00" y1="614" x2="433.00" y2="620" stroke="#000" stroke-width="2"/>
<line x1="442.00" y1="614" x2="442.00" y2="620" stroke="#000" stroke-width="2"/>
<line x1="451.00" y1="614" x2="451.00" y2="620" stroke="#000" stroke-width="2"/>
<line x1="460.00" y1="614" x2="460.00" y2="620" stroke="#000" stroke-width="2"/>
<line x1="469.00" y1="614" x2="469.00" y2="620" stroke="#000" stroke-width="2"/>
<line x1="478.00" y1="614" x2="478.00" y2="620" stroke="#000" stroke-width="2"/>
<line x1="487.00" y1="614" x2="487.00" y2="620" stroke="#000" stroke-width="2"/>
<line x1="496.00" y1="614" x2="496.00" y2="620" stroke="#000" stroke-width="2"/>
<line x1="505.00" y1="614" x2="505.00" y2="620" stroke="#000" stroke-width="2"/>
<line x1="514.00" y1="614" x2="514.00" y2="625" stroke="#000" stroke-width="2"/>
<line x1="523.00" y1="614" x2="523.00" y2="620" stroke="#000" stroke-width="2"/>
<line x1="532.00" y1="614" x2="532.00" y2="620" stroke="#000" stroke-width="2"/>
<line x1="540.00" y1="614" x2="540.00" y2="620" stroke="#000" stroke-width="2"/>
<line x1="549.00" y1="614" x2="549.00" y2="620" stroke="#000" stroke-width="2"/>
<line x1="558.00" y1="614" x2="558.00" y2="620" stroke="#000" stroke-width="2"/>
<line x1="567.00" y1="614" x2="567.00" y2="620" stroke="#000" stroke-width="2"/>
<line x1="576.00" y1="614" x2="576.00" y2="620" stroke="#000" stroke-width="2"/>
<line x1="585.00" y1="614" x2="585.00" y2="620" stroke="#000" stroke-width="2"/>
<line x1="594.00" y1="614" x2="594.00" y2="620" stroke="#000" stroke-width="2"/>
<line x1="603.00" y1="614" x2="603.00" y2="625" stroke="#000" stroke-width="2"/>
<line x1="612.00" y1="614" x2="612.00" y2="620" stroke="#000" stroke-width="2"/>
<line x1="621.00" y1="614" x2="621.00" y2="620" stroke="#000" stroke-width="2"/>
<line x1="630.00" y1="614" x2="630.00" y2="620" stroke="#000" stroke-width="2"/>
<line x1="639.00" y1="614" x2="639.00" y2="620" stroke="#000" stroke-width="2"/>
<line x1="648.00" y1="614" x2="648.00" y2="620" stroke="#000" stroke-width="2"/>
<line x1="657.00" y1="614" x2="657.00" y2="620" stroke="#000" stroke-width="2"/>
<polyline points="68,396 85,423 103,423 121,423 139,423 157,425 175,427 192,431 210,434 228,437 246,442 264,447 282,451 300,456 317,460 335,466 353,471 371,477 389,481 407,488 424,494 442,499 460,505 478,513 496,519 514,526 532,534 549,542 567,551 585,560 603,569 621,579 639,591 657,603" fill="none" stroke="#000080" stroke-width="2" shape-rendering="crispEdges"/>
<path d="M66 393h4v1h1v4h-1v1h-4v-1h-1v-4h1z" fill="#000080" shape-rendering="crispEdges"/>
<path d="M83 420h4v1h1v4h-1v1h-4v-1h-1v-4h1z" fill="#000080" shape-rendering="crispEdges"/>
<path d="M101 420h4v1h1v4h-1v1h-4v-1h-1v-4h1z" fill="#000080" shape-rendering="crispEdges"/>
<path d="M119 420h4v1h1v4h-1v1h-4v-1h-1v-4h1z" fill="#000080" shape-rendering="crispEdges"/>
<path d="M137 420h4v1h1v4h-1v1h-4v-1h-1v-4h1z" fill="#000080" shape-rendering="crispEdges"/>
<path d="M155 422h4v1h1v4h-1v1h-4v-1h-1v-4h1z" fill="#000080" shape-rendering="crispEdges"/>
<path d="M173 424h4v1h1v4h-1v1h-4v-1h-1v-4h1z" fill="#000080" shape-rendering="crispEdges"/>
<path d="M190 428h4v1h1v4h-1v1h-4v-1h-1v-4h1z" fill="#000080" shape-rendering="crispEdges"/>
<path d="M208 431h4v1h1v4h-1v1h-4v-1h-1v-4h1z" fill="#000080" shape-rendering="crispEdges"/>
<path d="M226 434h4v1h1v4h-1v1h-4v-1h-1v-4h1z" fill="#000080" shape-rendering="crispEdges"/>
<path d="M244 439h4v1h1v4h-1v1h-4v-1h-1v-4h1z" fill="#000080" shape-rendering="crispEdges"/>
<path d="M262 444h4v1h1v4h-1v1h-4v-1h-1v-4h1z" fill="#000080" shape-rendering="crispEdges"/>
<path d="M280 448h4v1h1v4h-1v1h-4v-1h-1v-4h1z" fill="#000080" shape-rendering="crispEdges"/>
<path d="M298 453h4v1h1v4h-1v1h-4v-1h-1v-4h1z" fill="#000080" shape-rendering="crispEdges"/>
<path d="M315 457h4v1h1v4h-1v1h-4v-1h-1v-4h1z" fill="#000080" shape-rendering="crispEdges"/>
<path d="M333 463h4v1h1v4h-1v1h-4v-1h-1v-4h1z" fill="#000080" shape-rendering="crispEdges"/>
<path d="M351 468h4v1h1v4h-1v1h-4v-1h-1v-4h1z" fill="#000080" shape-rendering="crispEdges"/>
<path d="M369 474h4v1h1v4h-1v1h-4v-1h-1v-4h1z" fill="#000080" shape-rendering="crispEdges"/>
<path d="M387 478h4v1h1v4h-1v1h-4v-1h-1v-4h1z" fill="#000080" shape-rendering="crispEdges"/>
<path d="M405 485h4v1h1v4h-1v1h-4v-1h-1v-4h1z" fill="#000080" shape-rendering="crispEdges"/>
<path d="M422 491h4v1h1v4h-1v1h-4v-1h-1v-4h1z" fill="#000080" shape-rendering="crispEdges"/>
<path d="M440 496h4v1h1v4h-1v1h-4v-1h-1v-4h1z" fill="#000080" shape-rendering="crispEdges"/>
<path d="M458 502h4v1h1v4h-1v1h-4v-1h-1v-4h1z" fill="#000080" shape-rendering="crispEdges"/>
<path d="M476 510h4v1h1v4h-1v1h-4v-1h-1v-4h1z" fill="#000080" shape-rendering="crispEdges"/>
<path d="M494 516h4v1h1v4h-1v1h-4v-1h-1v-4h1z" fill="#000080" shape-rendering="crispEdges"/>
<path d="M512 523h4v1h1v4h-1v1h-4v-1h-1v-4h1z" fill="#000080" shape-rendering="crispEdges"/>
<path d="M530 531h4v1h1v4h-1v1h-4v-1h-1v-4h1z" fill="#000080" shape-rendering="crispEdges"/>
<path d="M547 539h4v1h1v4h-1v1h-4v-1h-1v-4h1z" fill="#000080" shape-rendering="crispEdges"/>
<path d="M565 548h4v1h1v4h-1v1h-4v-1h-1v-4h1z" fill="#000080" shape-rendering="crispEdges"/>
<path d="M583 557h4v1h1v4h-1v1h-4v-1h-1v-4h1z" fill="#000080" shape-rendering="crispEdges"/>
<path d="M601 566h4v1h1v4h-1v1h-4v-1h-1v-4h1z" fill="#000080" shape-rendering="crispEdges"/>
<path d="M619 576h4v1h1v4h-1v1h-4v-1h-1v-4h1z" fill="#000080" shape-rendering="crispEdges"/>
<path d="M637 588h4v1h1v4h-1v1h-4v-1h-1v-4h1z" fill="#000080" shape-rendering="crispEdges"/>
<path d="M655 600h4v1h1v4h-1v1h-4v-1h-1v-4h1z" fill="#000080" shape-rendering="crispEdges"/>
<polyline points="68,305.3 85,356.3 103,416.3 121,460.3 139,489.3 157,514.3 175,531.3 192,543.3 210,555.3 228,560.3 246,566.3 264,570.3 282,573.3 300,573.3 317,572.3 335,578.3 353,578.3 371,577.3 389,576.3 407,579.3 424,578.3 442,579.3 460,574.3 478,575.3 496,572.3 514,569.3 532,571.3 549,565.3 567,566.3 585,564.3 603,562.3 621,559.3 639,555.3 657,552.3" fill="none" stroke="#800000" stroke-width="2" shape-rendering="crispEdges"/>
<path d="M65 302h2v1h-2zM70 302h2v1h-2zM65 303h3v1h-3zM69 303h3v1h-3zM66 304h5v1h-5zM67 305h3v1h-3zM66 306h5v1h-5zM65 307h3v1h-3zM69 307h3v1h-3zM65 308h2v1h-2zM70 308h2v1h-2z" fill="#800000"/>
<path d="M82 353h2v1h-2zM87 353h2v1h-2zM82 354h3v1h-3zM86 354h3v1h-3zM83 355h5v1h-5zM84 356h3v1h-3zM83 357h5v1h-5zM82 358h3v1h-3zM86 358h3v1h-3zM82 359h2v1h-2zM87 359h2v1h-2z" fill="#800000"/>
<path d="M100 413h2v1h-2zM105 413h2v1h-2zM100 414h3v1h-3zM104 414h3v1h-3zM101 415h5v1h-5zM102 416h3v1h-3zM101 417h5v1h-5zM100 418h3v1h-3zM104 418h3v1h-3zM100 419h2v1h-2zM105 419h2v1h-2z" fill="#800000"/>
<path d="M118 457h2v1h-2zM123 457h2v1h-2zM118 458h3v1h-3zM122 458h3v1h-3zM119 459h5v1h-5zM120 460h3v1h-3zM119 461h5v1h-5zM118 462h3v1h-3zM122 462h3v1h-3zM118 463h2v1h-2zM123 463h2v1h-2z" fill="#800000"/>
<path d="M136 486h2v1h-2zM141 486h2v1h-2zM136 487h3v1h-3zM140 487h3v1h-3zM137 488h5v1h-5zM138 489h3v1h-3zM137 490h5v1h-5zM136 491h3v1h-3zM140 491h3v1h-3zM136 492h2v1h-2zM141 492h2v1h-2z" fill="#800000"/>
<path d="M154 511h2v1h-2zM159 511h2v1h-2zM154 512h3v1h-3zM158 512h3v1h-3zM155 513h5v1h-5zM156 514h3v1h-3zM155 515h5v1h-5zM154 516h3v1h-3zM158 516h3v1h-3zM154 517h2v1h-2zM159 517h2v1h-2z" fill="#800000"/>
<path d="M172 528h2v1h-2zM177 528h2v1h-2zM172 529h3v1h-3zM176 529h3v1h-3zM173 530h5v1h-5zM174 531h3v1h-3zM173 532h5v1h-5zM172 533h3v1h-3zM176 533h3v1h-3zM172 534h2v1h-2zM177 534h2v1h-2z" fill="#800000"/>
<path d="M189 540h2v1h-2zM194 540h2v1h-2zM189 541h3v1h-3zM193 541h3v1h-3zM190 542h5v1h-5zM191 543h3v1h-3zM190 544h5v1h-5zM189 545h3v1h-3zM193 545h3v1h-3zM189 546h2v1h-2zM194 546h2v1h-2z" fill="#800000"/>
<path d="M207 552h2v1h-2zM212 552h2v1h-2zM207 553h3v1h-3zM211 553h3v1h-3zM208 554h5v1h-5zM209 555h3v1h-3zM208 556h5v1h-5zM207 557h3v1h-3zM211 557h3v1h-3zM207 558h2v1h-2zM212 558h2v1h-2z" fill="#800000"/>
<path d="M225 557h2v1h-2zM230 557h2v1h-2zM225 558h3v1h-3zM229 558h3v1h-3zM226 559h5v1h-5zM227 560h3v1h-3zM226 561h5v1h-5zM225 562h3v1h-3zM229 562h3v1h-3zM225 563h2v1h-2zM230 563h2v1h-2z" fill="#800000"/>
<path d="M243 563h2v1h-2zM248 563h2v1h-2zM243 564h3v1h-3zM247 564h3v1h-3zM244 565h5v1h-5zM245 566h3v1h-3zM244 567h5v1h-5zM243 568h3v1h-3zM247 568h3v1h-3zM243 569h2v1h-2zM248 569h2v1h-2z" fill="#800000"/>
<path d="M261 567h2v1h-2zM266 567h2v1h-2zM261 568h3v1h-3zM265 568h3v1h-3zM262 569h5v1h-5zM263 570h3v1h-3zM262 571h5v1h-5zM261 572h3v1h-3zM265 572h3v1h-3zM261 573h2v1h-2zM266 573h2v1h-2z" fill="#800000"/>
<path d="M279 570h2v1h-2zM284 570h2v1h-2zM279 571h3v1h-3zM283 571h3v1h-3zM280 572h5v1h-5zM281 573h3v1h-3zM280 574h5v1h-5zM279 575h3v1h-3zM283 575h3v1h-3zM279 576h2v1h-2zM284 576h2v1h-2z" fill="#800000"/>
<path d="M297 570h2v1h-2zM302 570h2v1h-2zM297 571h3v1h-3zM301 571h3v1h-3zM298 572h5v1h-5zM299 573h3v1h-3zM298 574h5v1h-5zM297 575h3v1h-3zM301 575h3v1h-3zM297 576h2v1h-2zM302 576h2v1h-2z" fill="#800000"/>
<path d="M314 569h2v1h-2zM319 569h2v1h-2zM314 570h3v1h-3zM318 570h3v1h-3zM315 571h5v1h-5zM316 572h3v1h-3zM315 573h5v1h-5zM314 574h3v1h-3zM318 574h3v1h-3zM314 575h2v1h-2zM319 575h2v1h-2z" fill="#800000"/>
<path d="M332 575h2v1h-2zM337 575h2v1h-2zM332 576h3v1h-3zM336 576h3v1h-3zM333 577h5v1h-5zM334 578h3v1h-3zM333 579h5v1h-5zM332 580h3v1h-3zM336 580h3v1h-3zM332 581h2v1h-2zM337 581h2v1h-2z" fill="#800000"/>
<path d="M350 575h2v1h-2zM355 575h2v1h-2zM350 576h3v1h-3zM354 576h3v1h-3zM351 577h5v1h-5zM352 578h3v1h-3zM351 579h5v1h-5zM350 580h3v1h-3zM354 580h3v1h-3zM350 581h2v1h-2zM355 581h2v1h-2z" fill="#800000"/>
<path d="M368 574h2v1h-2zM373 574h2v1h-2zM368 575h3v1h-3zM372 575h3v1h-3zM369 576h5v1h-5zM370 577h3v1h-3zM369 578h5v1h-5zM368 579h3v1h-3zM372 579h3v1h-3zM368 580h2v1h-2zM373 580h2v1h-2z" fill="#800000"/>
<path d="M386 573h2v1h-2zM391 573h2v1h-2zM386 574h3v1h-3zM390 574h3v1h-3zM387 575h5v1h-5zM388 576h3v1h-3zM387 577h5v1h-5zM386 578h3v1h-3zM390 578h3v1h-3zM386 579h2v1h-2zM391 579h2v1h-2z" fill="#800000"/>
<path d="M404 576h2v1h-2zM409 576h2v1h-2zM404 577h3v1h-3zM408 577h3v1h-3zM405 578h5v1h-5zM406 579h3v1h-3zM405 580h5v1h-5zM404 581h3v1h-3zM408 581h3v1h-3zM404 582h2v1h-2zM409 582h2v1h-2z" fill="#800000"/>
<path d="M421 575h2v1h-2zM426 575h2v1h-2zM421 576h3v1h-3zM425 576h3v1h-3zM422 577h5v1h-5zM423 578h3v1h-3zM422 579h5v1h-5zM421 580h3v1h-3zM425 580h3v1h-3zM421 581h2v1h-2zM426 581h2v1h-2z" fill="#800000"/>
<path d="M439 576h2v1h-2zM444 576h2v1h-2zM439 577h3v1h-3zM443 577h3v1h-3zM440 578h5v1h-5zM441 579h3v1h-3zM440 580h5v1h-5zM439 581h3v1h-3zM443 581h3v1h-3zM439 582h2v1h-2zM444 582h2v1h-2z" fill="#800000"/>
<path d="M457 571h2v1h-2zM462 571h2v1h-2zM457 572h3v1h-3zM461 572h3v1h-3zM458 573h5v1h-5zM459 574h3v1h-3zM458 575h5v1h-5zM457 576h3v1h-3zM461 576h3v1h-3zM457 577h2v1h-2zM462 577h2v1h-2z" fill="#800000"/>
<path d="M475 572h2v1h-2zM480 572h2v1h-2zM475 573h3v1h-3zM479 573h3v1h-3zM476 574h5v1h-5zM477 575h3v1h-3zM476 576h5v1h-5zM475 577h3v1h-3zM479 577h3v1h-3zM475 578h2v1h-2zM480 578h2v1h-2z" fill="#800000"/>
<path d="M493 569h2v1h-2zM498 569h2v1h-2zM493 570h3v1h-3zM497 570h3v1h-3zM494 571h5v1h-5zM495 572h3v1h-3zM494 573h5v1h-5zM493 574h3v1h-3zM497 574h3v1h-3zM493 575h2v1h-2zM498 575h2v1h-2z" fill="#800000"/>
<path d="M511 566h2v1h-2zM516 566h2v1h-2zM511 567h3v1h-3zM515 567h3v1h-3zM512 568h5v1h-5zM513 569h3v1h-3zM512 570h5v1h-5zM511 571h3v1h-3zM515 571h3v1h-3zM511 572h2v1h-2zM516 572h2v1h-2z" fill="#800000"/>
<path d="M529 568h2v1h-2zM534 568h2v1h-2zM529 569h3v1h-3zM533 569h3v1h-3zM530 570h5v1h-5zM531 571h3v1h-3zM530 572h5v1h-5zM529 573h3v1h-3zM533 573h3v1h-3zM529 574h2v1h-2zM534 574h2v1h-2z" fill="#800000"/>
<path d="M546 562h2v1h-2zM551 562h2v1h-2zM546 563h3v1h-3zM550 563h3v1h-3zM547 564h5v1h-5zM548 565h3v1h-3zM547 566h5v1h-5zM546 567h3v1h-3zM550 567h3v1h-3zM546 568h2v1h-2zM551 568h2v1h-2z" fill="#800000"/>
<path d="M564 563h2v1h-2zM569 563h2v1h-2zM564 564h3v1h-3zM568 564h3v1h-3zM565 565h5v1h-5zM566 566h3v1h-3zM565 567h5v1h-5zM564 568h3v1h-3zM568 568h3v1h-3zM564 569h2v1h-2zM569 569h2v1h-2z" fill="#800000"/>
<path d="M582 561h2v1h-2zM587 561h2v1h-2zM582 562h3v1h-3zM586 562h3v1h-3zM583 563h5v1h-5zM584 564h3v1h-3zM583 565h5v1h-5zM582 566h3v1h-3zM586 566h3v1h-3zM582 567h2v1h-2zM587 567h2v1h-2z" fill="#800000"/>
<path d="M600 559h2v1h-2zM605 559h2v1h-2zM600 560h3v1h-3zM604 560h3v1h-3zM601 561h5v1h-5zM602 562h3v1h-3zM601 563h5v1h-5zM600 564h3v1h-3zM604 564h3v1h-3zM600 565h2v1h-2zM605 565h2v1h-2z" fill="#800000"/>
<path d="M618 556h2v1h-2zM623 556h2v1h-2zM618 557h3v1h-3zM622 557h3v1h-3zM619 558h5v1h-5zM620 559h3v1h-3zM619 560h5v1h-5zM618 561h3v1h-3zM622 561h3v1h-3zM618 562h2v1h-2zM623 562h2v1h-2z" fill="#800000"/>
<path d="M636 552h2v1h-2zM641 552h2v1h-2zM636 553h3v1h-3zM640 553h3v1h-3zM637 554h5v1h-5zM638 555h3v1h-3zM637 556h5v1h-5zM636 557h3v1h-3zM640 557h3v1h-3zM636 558h2v1h-2zM641 558h2v1h-2z" fill="#800000"/>
<path d="M654 549h2v1h-2zM659 549h2v1h-2zM654 550h3v1h-3zM658 550h3v1h-3zM655 551h5v1h-5zM656 552h3v1h-3zM655 553h5v1h-5zM654 554h3v1h-3zM658 554h3v1h-3zM654 555h2v1h-2zM659 555h2v1h-2z" fill="#800000"/>
<text x="57" y="297.0" text-anchor="end" font-family="Liberation Sans" font-size="10.7" fill="#000">12.0</text>
<text x="57" y="458.0" text-anchor="end" font-family="Liberation Sans" font-size="10.7" fill="#000">11.0</text>
<text x="57" y="619.0" text-anchor="end" font-family="Liberation Sans" font-size="10.7" fill="#000">10.0</text>
<text x="667" y="297.0" font-family="Liberation Sans" font-size="10.7" fill="#000">9.0</text>
<text x="667" y="619.0" font-family="Liberation Sans" font-size="10.7" fill="#000">8.0</text>
<text x="67.2" y="635" text-anchor="middle" font-family="Liberation Sans" font-size="10.7" fill="#000">0</text>
<text x="156.2" y="635" text-anchor="middle" font-family="Liberation Sans" font-size="10.7" fill="#000">10</text>
<text x="245.2" y="635" text-anchor="middle" font-family="Liberation Sans" font-size="10.7" fill="#000">20</text>
<text x="334.2" y="635" text-anchor="middle" font-family="Liberation Sans" font-size="10.7" fill="#000">30</text>
<text x="423.2" y="635" text-anchor="middle" font-family="Liberation Sans" font-size="10.7" fill="#000">40</text>
<text x="513.2" y="635" text-anchor="middle" font-family="Liberation Sans" font-size="10.7" fill="#000">50</text>
<text x="602.2" y="635" text-anchor="middle" font-family="Liberation Sans" font-size="10.7" fill="#000">60</text>
<text x="362" y="648" text-anchor="middle" font-family="Liberation Sans" font-size="10.7" fill="#000">Mins</text>
<text transform="translate(16.6,452) rotate(-90)" text-anchor="middle" font-family="Liberation Sans" font-size="11.2" fill="#000">Volts</text>
<text transform="translate(718.4,453) rotate(-90)" text-anchor="middle" font-family="Liberation Sans" font-size="11.2" fill="#000">Watts</text>
</svg>

<!-- window frame -->
<div class="a" style="left:0;top:0;width:725px;height:1px;background:#555"></div>
<div class="a" style="left:0;top:0;width:1px;height:655px;background:#555"></div>
<div class="a" style="left:724px;top:0;width:1px;height:655px;background:#555"></div>
<div class="a" style="left:723px;top:81px;width:1px;height:116px;background:#5a5a5a"></div>
<div class="a" style="left:723px;top:197px;width:1px;height:21px;background:#fafafa"></div>
<div class="a" style="left:723px;top:218px;width:1px;height:437px;background:#5a5a5a"></div>
<div class="a" style="left:722px;top:81px;width:1px;height:115px;background:#f8f8f8"></div>
<div class="a" style="left:723px;top:48px;width:1px;height:32px;background:#fafafa"></div>
<div class="a" style="left:0;top:653px;width:725px;height:2px;background:#5a5a5a"></div>
</body></html>
